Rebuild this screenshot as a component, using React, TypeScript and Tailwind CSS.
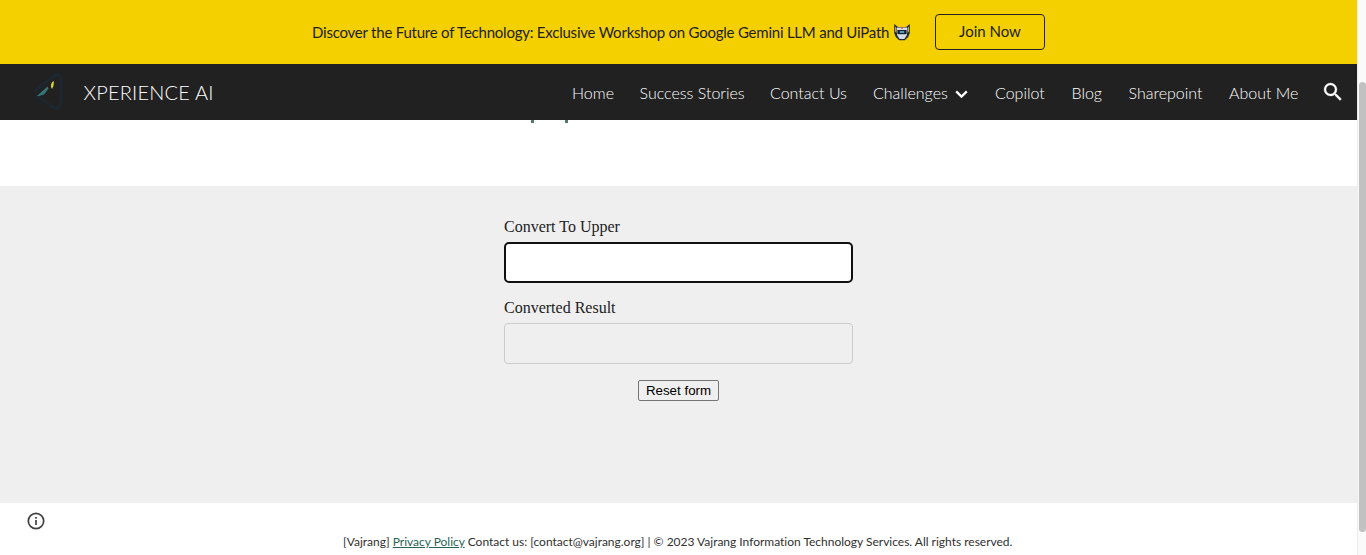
const links = [
  { label: "Home", box: "w-[41.5px]" },
  { label: "Success Stories", box: "w-[104.5px]" },
  { label: "Contact Us", box: "w-[77px]" },
  { label: "Challenges", box: "w-[96px]", menu: true },
  { label: "Copilot", box: "w-[50.5px]" },
  { label: "Blog", box: "w-[31px]" },
  { label: "Sharepoint", box: "w-[74.5px]" },
  { label: "About Me", box: "w-[68px]" },
];

function RobotMark() {
  return (
    <svg className="ml-1 size-[18px] shrink-0" viewBox="0 0 18 18">
      <path d="M1.2 1 5 4h8l3.8-3v9l-1.6 4-3.4 3.2H6.2L2.8 14 1.2 10Z" fill="#252a32" />
      <path d="M4 4.5h10V12l-2.6 4H6.6L4 12Z" fill="#d5dde8" />
      <path d="M2 3.4 3.6 5v5L2 8.6ZM16 3.4 14.4 5v5L16 8.6Z" fill="#bfa94a" />
      <path d="M4.4 7h9.2v4.2H4.4Z" fill="#16222e" />
      <path d="M6.8 8.2h4.4v1.6H6.8Z" fill="#66bde4" />
      <path d="M8.3 3.8h1.4v2.2H8.3Z" fill="#e55443" />
    </svg>
  );
}

function Brand() {
  return (
    <div className="flex items-center">
      <svg className="h-10 w-9 shrink-0" viewBox="0 0 36 40">
        <path d="M4 20 C12 13 20 7 26 3 Q31 2 31 9 V31 Q30 37 25 36 C18 32 12 27 6 24" fill="none" stroke="#1c2730" strokeWidth="3" />
        <path d="M7 24 17.5 14.5 18.5 16.5 14 22.5 9 24Z" fill="#347779" />
        <path d="M21 12.5 Q21.5 9.5 24 9 Q24 14 22 17 Q20.5 15.5 21 12.5Z" fill="#d5cf3a" />
      </svg>
      <span className="ml-[17.5px] text-[20px] leading-7 font-light tracking-[0.2px] whitespace-nowrap">XPERIENCE AI</span>
    </div>
  );
}

export default function App() {
  return (
    <div className="flex h-[555px] w-full overflow-hidden bg-white font-['Lato',sans-serif]">
      <div className="flex w-[1357px] shrink-0 flex-col">
        <div className="flex h-16 shrink-0 items-center bg-[#f4d000] pl-[312px] text-[15px] text-[#212121]">
          <div className="flex w-[623px] items-center">
            <span className="tracking-[-0.225px] whitespace-nowrap">
              Discover the Future of Technology: Exclusive Workshop on Google Gemini LLM and UiPath
            </span>
            <RobotMark />
          </div>
          <button className="h-9 w-[110px] rounded border border-[#212121] pb-0.5 text-[15px]">Join Now</button>
        </div>
        <header className="flex h-14 shrink-0 items-center justify-between bg-[#212121] pr-[12px] pl-[30px] text-white">
          <Brand />
          <nav className="flex items-center gap-[26px] pt-0.5 text-[16px] font-light">
            {links.map((l) => (
              <a key={l.label} className={`flex items-center justify-between whitespace-nowrap ${l.box}`}>
                {l.label}
                {l.menu && (
                  <svg className="h-3 w-4 shrink-0" viewBox="0 0 16 12" fill="none" stroke="white" strokeWidth="2.3">
                    <path d="m3.2 4.4 5.3 5.2 5.3-5.2" />
                  </svg>
                )}
              </a>
            ))}
            <svg className="mb-[3px] -ml-[2px] size-6" viewBox="0 0 24 24" fill="white" stroke="white" strokeWidth="0.3">
              <path d="M15.5 14h-.79l-.28-.27A6.47 6.47 0 0 0 16 9.5 6.5 6.5 0 1 0 9.5 16c1.61 0 3.09-.59 4.23-1.57l.27.28v.79l5 4.99L20.49 19l-4.99-5zm-6 0a4.5 4.5 0 1 1 0-9 4.5 4.5 0 0 1 0 9z" />
            </svg>
          </nav>
        </header>
        <div className="flex h-[66px] shrink-0 gap-[31px] bg-white pl-[531px]">
          <span className="h-[3px] w-[3px] bg-[#52776f]" />
          <span className="h-[3px] w-[3px] bg-[#52776f]" />
        </div>
        <main className="flex h-[317px] shrink-0 flex-col items-center bg-[#efefef] pt-[31px]">
          <form className="flex w-[349px] flex-col font-['Liberation_Serif',serif] text-[16px] leading-5 text-[#212121]">
            <label>Convert To Upper</label>
            <input className="mt-[5px] h-[41px] rounded-[5px] border-2 border-[#101010] bg-white outline-none" />
            <label className="mt-[15px]">Converted Result</label>
            <input readOnly className="mt-[5px] h-[41px] rounded border border-[#cccccc] outline-none" />
            <button
              type="reset"
              className="mt-4 h-[21px] w-[81px] self-center rounded-[2px] border border-[#767676] bg-[#efefef] font-['Liberation_Sans',sans-serif] text-[13.333px] leading-[19px] whitespace-nowrap text-black"
            >
              Reset form
            </button>
          </form>
        </main>
        <footer className="flex h-[52px] shrink-0 items-start bg-white pl-[26px]">
          <svg className="mt-2 size-5" viewBox="0 0 20 20" fill="none" stroke="#424242" strokeWidth="1.7">
            <circle cx="10" cy="10" r="7.7" />
            <path d="M10 9v5M10 6v1.7" />
          </svg>
          <p className="mt-[30px] ml-[297px] text-[12px] leading-[18px] tracking-[-0.01px] whitespace-nowrap text-[#303030]">
            [Vajrang] <a className="text-[#2a6355] underline">Privacy Policy</a> Contact us: [contact@vajrang.org] | © 2023
            Vajrang Information Technology Services. All rights reserved.
          </p>
        </footer>
      </div>
      <div className="flex grow flex-col items-center border-l border-[#ececec] bg-[#fafafa] pt-[82px]">
        <div className="h-[450px] w-[7px] rounded-full bg-[#c1c1c1]" />
      </div>
    </div>
  );
}
